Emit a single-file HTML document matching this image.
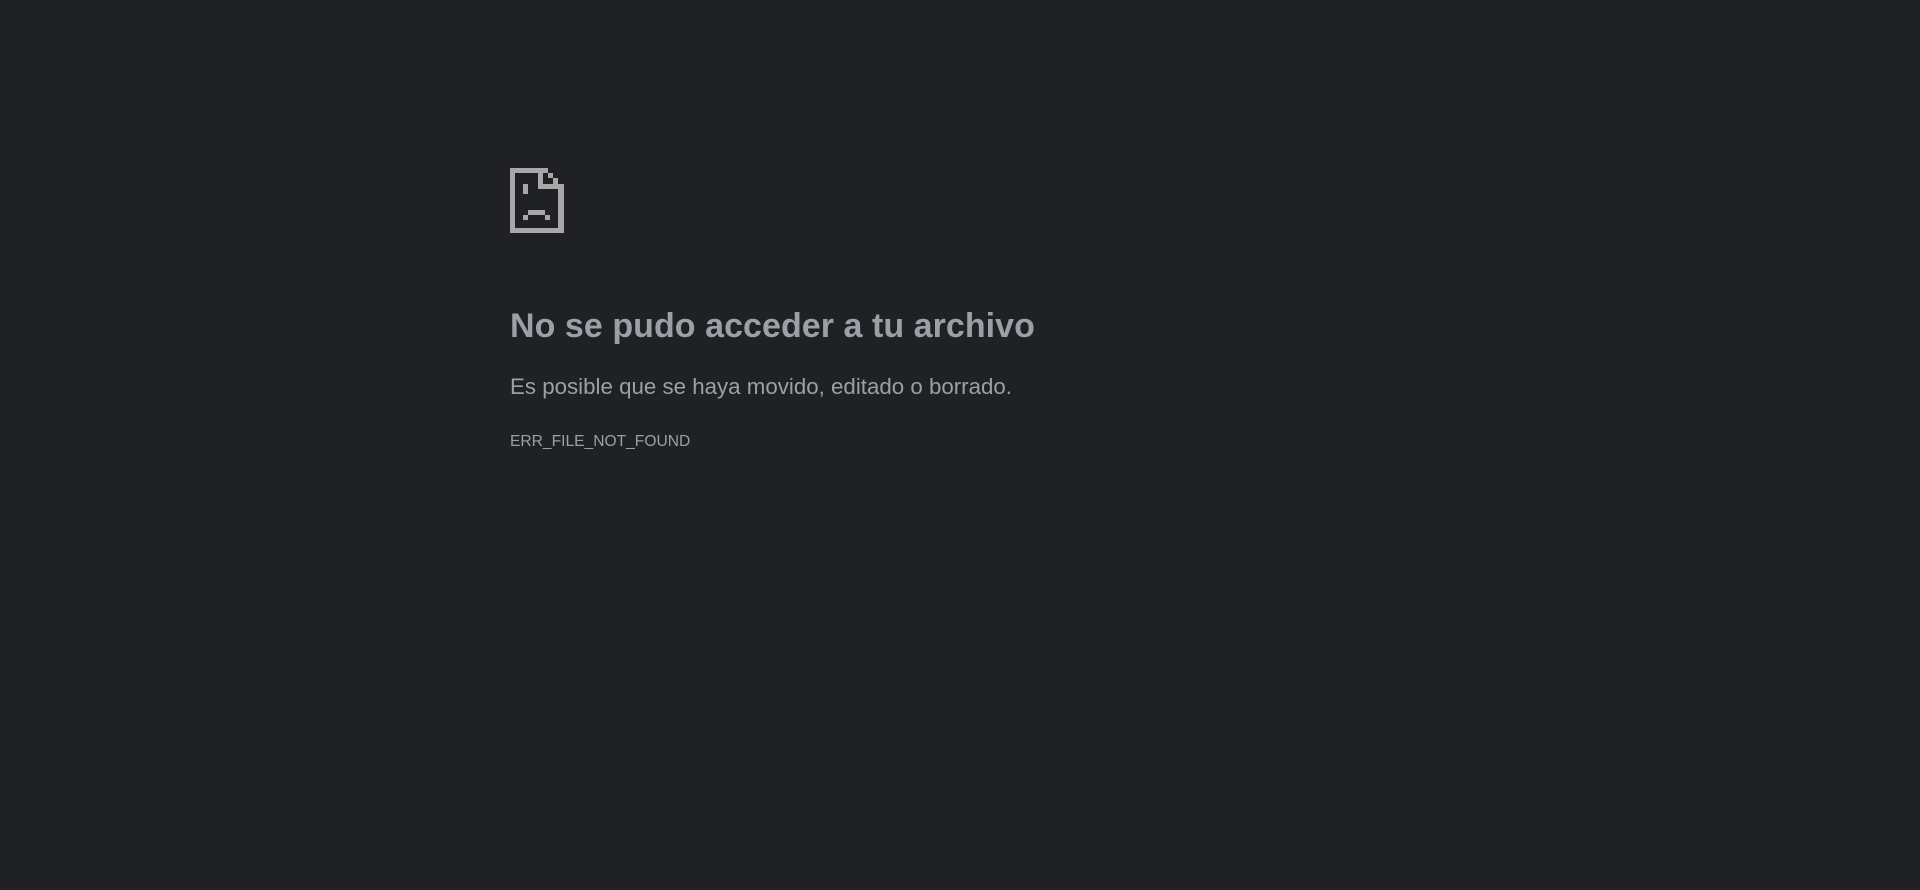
<!DOCTYPE html>
<html><head><meta charset="utf-8"><style>
html,body{margin:0;padding:0;background:#202124;width:1920px;height:890px;overflow:hidden}
body{font-family:"Liberation Sans",sans-serif;color:#9aa0a6}
svg{position:absolute;left:510px;top:168px}
.t{position:absolute;left:510px;white-space:nowrap}
h1{margin:0;font-size:34px;font-weight:bold;top:306px;line-height:40px;letter-spacing:0.05px}
.p{font-size:22.3px;top:374px;line-height:26px}
.e{font-size:15.6px;top:432px;line-height:20px;color:#9aa0a6}
</style></head><body>
<svg width="54" height="65" viewBox="0 0 54 65" fill="#a8a8a8">
<rect x="0" y="0" width="5" height="65"/>
<rect x="0" y="0" width="38" height="5"/>
<rect x="38" y="5" width="5" height="5"/>
<rect x="43" y="10" width="5" height="6"/>
<rect x="48" y="16" width="6" height="49"/>
<rect x="28" y="5" width="5" height="16"/>
<rect x="28" y="16" width="26" height="5"/>
<rect x="0" y="60" width="54" height="5"/>
<rect x="13" y="16" width="5" height="10"/>
<rect x="18" y="42" width="17" height="5"/>
<rect x="13" y="47" width="5" height="5"/>
<rect x="35" y="47" width="5" height="5"/>
</svg>
<h1 class="t">No se pudo acceder a tu archivo</h1>
<div class="t p">Es posible que se haya movido, editado o borrado.</div>
<div class="t e">ERR_FILE_NOT_FOUND</div>
</body></html>
